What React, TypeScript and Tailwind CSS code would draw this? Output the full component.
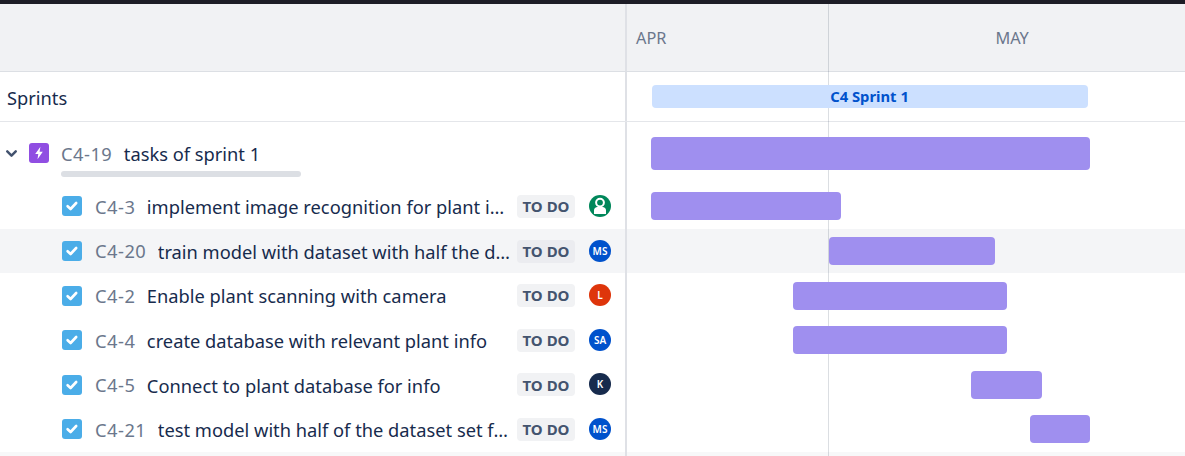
import { ChevronDown } from "lucide-react";

type Issue = {
  id: string;
  title: string;
  initials: string;
  avatar: string;
  bar: string;
  active?: boolean;
};

const issues: Issue[] = [
  { id: "C4-3", title: "implement image recognition for plant identification", initials: "", avatar: "bg-[#00875a]", bar: "ml-[24px] w-[190px]" },
  { id: "C4-20", title: "train model with dataset with half the dataset size", initials: "MS", avatar: "bg-[#0052cc]", bar: "ml-[202px] w-[166px]", active: true },
  { id: "C4-2", title: "Enable plant scanning with camera", initials: "L", avatar: "bg-[#de350b]", bar: "ml-[166px] w-[214px]" },
  { id: "C4-4", title: "create database with relevant plant info", initials: "SA", avatar: "bg-[#0052cc]", bar: "ml-[166px] w-[214px]" },
  { id: "C4-5", title: "Connect to plant database for info", initials: "K", avatar: "bg-[#172b4d]", bar: "ml-[344px] w-[71px]" },
  { id: "C4-21", title: "test model with half of the dataset set for validation", initials: "MS", avatar: "bg-[#0052cc]", bar: "ml-[403px] w-[60px]" },
];

function StoryCheck() {
  return (
    <div className="flex h-[20px] w-[20px] shrink-0 items-center justify-center rounded-[3px] bg-[#4bade8]">
      <svg viewBox="0 0 16 16" className="h-[16px] w-[16px]" fill="none">
        <path d="M3.6 8.2 6.6 11 12.2 5" stroke="white" strokeWidth="2.6" strokeLinecap="round" strokeLinejoin="round" />
      </svg>
    </div>
  );
}

function Avatar({ issue }: { issue: Issue }) {
  return (
    <div className={`flex h-[22px] w-[22px] shrink-0 items-center justify-center overflow-hidden rounded-full ${issue.avatar}`}>
      {issue.initials ? (
        <span className="text-[10px] font-semibold leading-none text-white">{issue.initials}</span>
      ) : (
        <svg viewBox="0 0 22 22" className="h-[22px] w-[22px]">
          <circle cx="11" cy="7.6" r="3.9" fill="none" stroke="white" strokeWidth="2" />
          <path d="M5 19v-3.500c0-2 1.500-3.500 3.500-3.500h5c2 0 3.500 1.500 3.500 3.500V19z" fill="white" />
        </svg>
      )}
    </div>
  );
}

function IssueRow({ issue }: { issue: Issue }) {
  return (
    <div className={`flex h-[44.6px] ${issue.active ? "bg-[#f4f5f7]" : ""}`}>
      <div className="flex w-[625px] shrink-0 items-center pl-[62px] pr-[14px]">
        <StoryCheck />
        <span className="ml-[13px] shrink-0 tracking-[0.5px] text-[#6b778c]">{issue.id}</span>
        <span className="ml-[11.5px] min-w-0 flex-1 truncate pt-px text-[#172b4d]">{issue.title}</span>
        <span className={`ml-[6px] flex h-[23px] w-[58px] shrink-0 items-center justify-center rounded-[4px] text-[15px] font-bold text-[#44546f] ${issue.active ? "bg-[#ebecf0]" : "bg-[#f1f2f4]"}`}>
          TO DO
        </span>
        <span className="ml-[14px] -mt-px">
          <Avatar issue={issue} />
        </span>
      </div>
      <div className="flex flex-1 items-center border-l-2 border-[#dfe1e6]">
        <div className={`relative z-10 h-[28px] rounded-[4px] bg-[#9f8fef] ${issue.bar}`} />
      </div>
    </div>
  );
}

export default function App() {
  return (
    <div className="relative h-[456px] w-[1185px] overflow-hidden bg-white font-['Noto_Sans',sans-serif] text-[18.3px] text-[#172b4d]">
      <div className="h-[4px] bg-[#1d1d26]" />

      <div className="flex h-[68px] border-b border-[#dcdfe4] bg-[#f1f2f4]">
        <div className="w-[625px] shrink-0" />
        <div className="flex flex-1 items-center border-l-2 border-[#dfe1e6] pt-[2px] text-[16.3px] text-[#6b778c]">
          <span className="ml-[9px]">APR</span>
          <span className="ml-[329px]">MAY</span>
        </div>
      </div>

      <div className="flex h-[50px] border-b border-[#e4e6ea]">
        <div className="flex w-[625px] shrink-0 items-center pl-[7px] pt-[3px]">Sprints</div>
        <div className="flex flex-1 items-center border-l-2 border-[#dfe1e6]">
          <div className="relative z-10 ml-[25px] flex h-[23px] w-[436px] items-center justify-center rounded-[4px] bg-[#cce0ff] pr-[1px] text-[14.8px] font-bold text-[#0052cc]">
            C4 Sprint 1
          </div>
        </div>
      </div>

      <div className="flex h-[62.2px]">
        <div className="flex w-[625px] shrink-0 pl-[3px] pt-[21px]">
          <ChevronDown className="mt-[2px] h-[17px] w-[17px] text-[#42526e]" strokeWidth={3.5} />
          <div className="ml-[9px] flex h-[20px] w-[20px] shrink-0 items-center justify-center rounded-[3px] bg-[#904ee2]">
            <svg viewBox="0 0 16 16" className="h-[16px] w-[16px]">
              <path d="M9.400 1.800 4.200 9h3.100l-.8 5.200L11.800 6.800H8.600z" fill="white" />
            </svg>
          </div>
          <div className="ml-[12px] w-[240px]">
            <div className="-mt-[1px] flex h-[24px] items-center whitespace-nowrap">
              <span className="tracking-[0.5px] text-[#6b778c]">C4-19</span>
              <span className="ml-[11.5px]">tasks of sprint 1</span>
            </div>
            <div className="mt-[5px] h-[6px] w-[240px] rounded-full bg-[#dcdfe4]" />
          </div>
        </div>
        <div className="flex-1 border-l-2 border-[#dfe1e6] pt-[15px]">
          <div className="relative z-10 ml-[24px] h-[33px] w-[439px] rounded-[4px] bg-[#9f8fef]" />
        </div>
      </div>

      {issues.map((issue) => (
        <IssueRow key={issue.id} issue={issue} />
      ))}

      <div className="flex h-[5px] bg-[#f7f8f9]">
        <div className="w-[625px]" />
        <div className="flex-1 border-l-2 border-[#dfe1e6]" />
      </div>

      {/* month divider sits behind the bars */}
      <div className="absolute bottom-0 left-[828px] top-[4px] w-px bg-[#0c1f3f]/15" />
    </div>
  );
}
